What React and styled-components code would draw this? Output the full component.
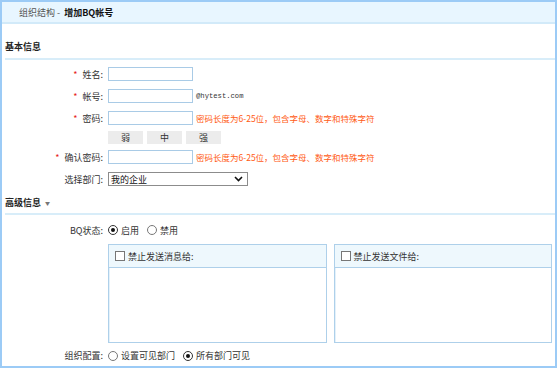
import styled, { createGlobalStyle } from 'styled-components';

const GlobalStyle = createGlobalStyle`
  html, body {
    margin: 0;
    padding: 0;
    background: #fff;
  }
  body {
    font-family: "Noto Sans CJK SC", "Noto Sans", sans-serif;
    font-size: 9px;
    color: #333;
  }
`;

const Frame = styled.div`
  box-sizing: border-box;
  width: 557px;
  height: 368px;
  border: 2px solid #9ccbf6;
  display: flex;
  flex-direction: column;
  overflow: hidden;
`;

const TopBar = styled.div`
  height: 20px;
  background: #e8f6ff;
  border-bottom: 2px solid #d2eaf9;
  display: flex;
  align-items: center;
  padding-left: 17px;
  color: #555;
  line-height: 1;

  b {
    color: #111;
    margin-left: 4px;
  }
`;

const SectionTitle = styled.div`
  margin-left: 3px;
  padding: ${(p) => p.$top}px 0 ${(p) => p.$bottom}px 0;
  line-height: 14px;
  border-bottom: 2px solid #d8edf9;
  font-weight: bold;
  color: #222;
  display: flex;
  align-items: center;
`;

const Caret = styled.i`
  font-style: normal;
  color: #777;
  font-size: 5px;
  margin-left: 4px;
`;

const Rows = styled.div`
  padding-top: ${(p) => p.$top || 0}px;
  display: flex;
  flex-direction: column;
`;

const Row = styled.div`
  height: ${(p) => p.$h || 22}px;
  display: flex;
  align-items: center;
`;

const Label = styled.label`
  width: 101px;
  flex: none;
  text-align: right;
  margin-right: 5px;
  color: #333;
  white-space: nowrap;
`;

const Star = styled.em`
  font-style: normal;
  color: #e62020;
  margin-right: 5px;
`;

const TextInput = styled.input`
  box-sizing: border-box;
  width: 85px;
  height: 14px;
  border: 1px solid #a9cbe6;
  padding: 0 2px;
  outline: none;
  font-size: 9px;
`;

const Suffix = styled.span`
  margin-left: 3px;
  font-family: "Liberation Mono", monospace;
  font-size: 7.2px;
  color: #333;
`;

const Hint = styled.span`
  margin-left: 3px;
  color: #ff5a14;
  font-size: 8.5px;
  white-space: nowrap;
`;

const Strength = styled.div`
  display: flex;
  gap: 4px;
`;

const StrengthBox = styled.span`
  width: 35px;
  height: 13px;
  background: #ececec;
  display: flex;
  align-items: center;
  justify-content: center;
  color: #333;
  font-size: 9px;
`;

const Select = styled.div`
  box-sizing: border-box;
  width: 140px;
  height: 14px;
  border: 1px solid #8c8c8c;
  display: flex;
  align-items: center;
  justify-content: space-between;
  padding: 0 4px 0 2px;
  color: #111;
  background: #fff;
`;

const RadioGroup = styled.div`
  display: flex;
  align-items: center;
`;

const RadioItem = styled.span`
  display: flex;
  align-items: center;
  margin-right: ${(p) => p.$gap || 10}px;
  color: #333;
`;

const Dot = styled.span`
  box-sizing: border-box;
  width: 10px;
  height: 10px;
  border-radius: 50%;
  border: 1px solid ${(p) => (p.$on ? '#333' : '#777')};
  margin-right: 3px;
  display: flex;
  align-items: center;
  justify-content: center;

  &::after {
    content: '';
    width: 4px;
    height: 4px;
    border-radius: 50%;
    background: ${(p) => (p.$on ? '#111' : 'transparent')};
  }
`;

const Panels = styled.div`
  display: flex;
  gap: 7px;
  margin: 3px 3px 0 106px;
  height: 99px;
`;

const Panel = styled.div`
  flex: 1;
  box-sizing: border-box;
  border: 1px solid #aed0ea;
  box-shadow: inset 1px 1px 0 #e4f1fa;
  display: flex;
  flex-direction: column;
`;

const PanelHead = styled.div`
  height: 22px;
  background: #eef8fd;
  border-bottom: 1px solid #aed0ea;
  display: flex;
  align-items: center;
  padding-left: 6px;
  color: #333;
`;

const Box = styled.span`
  box-sizing: border-box;
  width: 10px;
  height: 10px;
  border: 1px solid #777;
  background: #fff;
  margin-right: 3px;
`;

const Chevron = () => (
  <svg width="9" height="6" viewBox="0 0 9 6">
    <path d="M1 1 L4.5 4.5 L8 1" fill="none" stroke="#111" strokeWidth="1.6" />
  </svg>
);

const Radio = ({ on, children, gap }) => (
  <RadioItem $gap={gap}>
    <Dot $on={on} />
    {children}
  </RadioItem>
);

export default function App() {
  const hint = '密码长度为6-25位，包含字母、数字和特殊字符';
  return (
    <>
      <GlobalStyle />
      <Frame>
        <TopBar>
          组织结构 - <b>增加BQ帐号</b>
        </TopBar>

        <SectionTitle $top={16} $bottom={4}>
          基本信息
        </SectionTitle>

        <Rows $top={3}>
          <Row>
            <Label>
              <Star>*</Star>姓名:
            </Label>
            <TextInput />
          </Row>
          <Row>
            <Label>
              <Star>*</Star>帐号:
            </Label>
            <TextInput />
            <Suffix>@hytest.com</Suffix>
          </Row>
          <Row>
            <Label>
              <Star>*</Star>密码:
            </Label>
            <TextInput type="password" />
            <Hint>{hint}</Hint>
          </Row>
          <Row $h={17}>
            <Label />
            <Strength>
              <StrengthBox>弱</StrengthBox>
              <StrengthBox>中</StrengthBox>
              <StrengthBox>强</StrengthBox>
            </Strength>
          </Row>
          <Row>
            <Label>
              <Star>*</Star>确认密码:
            </Label>
            <TextInput type="password" />
            <Hint>{hint}</Hint>
          </Row>
          <Row>
            <Label>选择部门:</Label>
            <Select>
              <span>我的企业</span>
              <Chevron />
            </Select>
          </Row>
        </Rows>

        <SectionTitle $top={6} $bottom={3}>
          高级信息
          <Caret>▼</Caret>
        </SectionTitle>

        <Rows $top={4}>
          <Row>
            <Label>BQ状态:</Label>
            <RadioGroup>
              <Radio on gap={8}>启用</Radio>
              <Radio>禁用</Radio>
            </RadioGroup>
          </Row>
        </Rows>

        <Panels>
          <Panel>
            <PanelHead>
              <Box />
              禁止发送消息给:
            </PanelHead>
          </Panel>
          <Panel>
            <PanelHead>
              <Box />
              禁止发送文件给:
            </PanelHead>
          </Panel>
        </Panels>

        <Rows $top={2}>
          <Row $h={21}>
            <Label>组织配置:</Label>
            <RadioGroup>
              <Radio gap={8}>设置可见部门</Radio>
              <Radio on>所有部门可见</Radio>
            </RadioGroup>
          </Row>
        </Rows>
      </Frame>
    </>
  );
}
